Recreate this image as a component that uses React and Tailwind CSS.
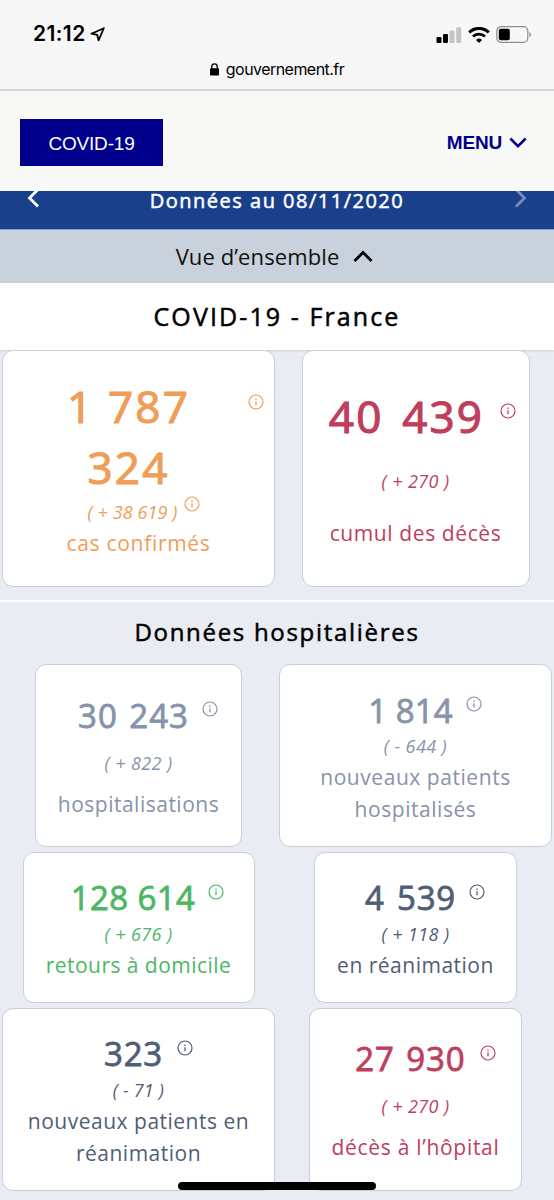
const summary = [
  {
    lines: ["1 787", "324"],
    delta: "( + 38 619 )",
    deltaInfo: true,
    label: ["cas confirmés"],
    color: "text-[#ef9d57]",
    box: "w-[273px] h-[237px] pt-[25px]",
    number:
      "text-[44px] leading-[61px] tracking-[2.2px] [-webkit-text-stroke:1.2px] pl-[54px] gap-[58px]",
    iconClass: "mt-[18px]",
    deltaClass: "tracking-[0.1px] mt-[2px] pl-[10px]",
    labelClass: "mt-[3px] tracking-[0.7px]",
  },
  {
    lines: ["40 439"],
    delta: "( + 270 )",
    label: ["cumul des décès"],
    color: "text-[#be3e5c]",
    box: "w-[228px] h-[237px] pt-[35px]",
    number:
      "text-[44px] leading-[61px] tracking-[2.2px] [word-spacing:5px] [-webkit-text-stroke:1.2px] pl-[14px] gap-[16px]",
    iconClass: "mt-[17px]",
    deltaClass: "mt-[22px] tracking-[0.4px]",
    labelClass: "mt-[24px] tracking-[0.6px]",
  },
];

const hospital = [
  {
    lines: ["30 243"],
    delta: "( + 822 )",
    label: ["hospitalisations"],
    color: "text-[#8693aa]",
    box: "w-[207px] h-[183px] pt-[28px]",
    number:
      "text-[33px] leading-[46px] tracking-[1px] [word-spacing:2px] [-webkit-text-stroke:0.8px] pl-[19px] gap-[13px]",
    iconClass: "mt-[8px]",
    deltaClass: "mt-[12px] tracking-[0.4px]",
    labelClass: "mt-[13px] tracking-[0.5px]",
  },
  {
    lines: ["1 814"],
    delta: "( - 644 )",
    label: ["nouveaux patients", "hospitalisés"],
    color: "text-[#8693aa]",
    box: "w-[273px] h-[183px] pt-[23px]",
    number:
      "text-[33px] leading-[46px] tracking-[0.1px] [-webkit-text-stroke:0.8px] pl-[19px] gap-[13px]",
    iconClass: "mt-[8px]",
    deltaClass: "tracking-[0.4px]",
    labelClass: "mt-[3px] tracking-[0.55px]",
  },
  {
    lines: ["128 614"],
    delta: "( + 676 )",
    label: ["retours à domicile"],
    color: "text-[#4cb763]",
    box: "w-[232px] h-[151px] pt-[22px]",
    number:
      "text-[33px] leading-[46px] tracking-[0.4px] [-webkit-text-stroke:0.8px] pl-[18px] gap-[13px]",
    iconClass: "mt-[9px]",
    deltaClass: "mt-[1px] tracking-[0.4px]",
    labelClass: "mt-[3px] tracking-[0.45px]",
  },
  {
    lines: ["4 539"],
    delta: "( + 118 )",
    label: ["en réanimation"],
    color: "text-[#505d75]",
    box: "w-[203px] h-[151px] pt-[22px]",
    number:
      "text-[33px] leading-[46px] tracking-[0.8px] [word-spacing:3px] [-webkit-text-stroke:0.8px] pl-[19px] gap-[13px]",
    iconClass: "mt-[9px]",
    deltaClass: "mt-[1px] tracking-[0.4px]",
    labelClass: "mt-[3px] tracking-[0.5px]",
  },
  {
    lines: ["323"],
    delta: "( - 71 )",
    label: ["nouveaux patients en", "réanimation"],
    color: "text-[#505d75]",
    box: "w-[273px] h-[183px] pt-[22px]",
    number:
      "text-[33px] leading-[46px] tracking-[0.8px] [-webkit-text-stroke:0.8px] pl-[20px] gap-[14px]",
    iconClass: "mt-[9px]",
    deltaClass: "mt-[1px] tracking-[0.2px]",
    labelClass: "mt-[3px] tracking-[0.5px]",
  },
  {
    lines: ["27 930"],
    delta: "( + 270 )",
    label: ["décès à l’hôpital"],
    color: "text-[#be3e5c]",
    box: "w-[213px] h-[183px] pt-[27px]",
    number:
      "text-[33px] leading-[46px] tracking-[0.9px] [word-spacing:2px] [-webkit-text-stroke:0.8px] pl-[20px] gap-[14px]",
    iconClass: "mt-[9px]",
    deltaClass: "mt-[12px] tracking-[0.4px]",
    labelClass: "mt-[13px] tracking-[0.7px]",
  },
];

const InfoIcon = ({ className }) => (
  <svg
    className={`h-4 w-4 shrink-0 ${className}`}
    viewBox="0 0 16 16"
    fill="none"
    stroke="currentColor"
  >
    <circle cx="8" cy="8" r="7" strokeWidth="1.2" />
    <path d="M8 7.2v4" strokeWidth="1.3" />
    <path d="M8 4.6v1.5" strokeWidth="1.3" />
  </svg>
);

const Chevron = ({ d, className, viewBox = "0 0 20 20" }) => (
  <svg
    className={className}
    viewBox={viewBox}
    fill="none"
    stroke="currentColor"
    strokeWidth="2.8"
  >
    <path d={d} />
  </svg>
);

const Card = ({ item }) => (
  <div className="flex justify-center">
    <div
      className={`shrink-0 rounded-[11px] border border-[#c8cfdc] bg-white text-center ${item.box} ${item.color}`}
    >
      <div className={`flex justify-center ${item.number}`}>
        <div className="whitespace-nowrap">
          {item.lines.map((line) => (
            <div key={line}>{line}</div>
          ))}
        </div>
        <InfoIcon className={item.iconClass} />
      </div>
      <div
        className={`flex h-6 justify-center gap-[6px] text-[18px] leading-6 italic ${item.deltaClass}`}
      >
        <span className="whitespace-nowrap">{item.delta}</span>
        {item.deltaInfo && <InfoIcon className="-mt-[4px]" />}
      </div>
      <div className={`text-[21px] leading-8 ${item.labelClass}`}>
        {item.label.map((line) => (
          <div key={line} className="whitespace-nowrap">
            {line}
          </div>
        ))}
      </div>
    </div>
  </div>
);

const StatusBar = () => (
  <div className="h-[91px] border-b-2 border-[#d5d5d7] bg-[#f7f7f8] font-['Inter',sans-serif] text-black">
    <div className="flex h-[50px] items-end justify-between pr-[23px] pb-[4px] pl-[33px]">
      <div className="flex items-center gap-[4px]">
        <span className="text-[21px] leading-6 font-semibold tracking-[0.4px]">
          21:12
        </span>
        <svg
          className="h-[15px] w-[15px]"
          viewBox="0 0 15 15"
          fill="none"
          stroke="currentColor"
          strokeWidth="1.8"
          strokeLinejoin="round"
        >
          <path d="M13.8 1.2 1.4 6.7 7.2 7.8 8.6 13.4Z" />
        </svg>
      </div>
      <div className="mb-[3px] flex items-center gap-[6px]">
        <svg className="h-4 w-[26px]" viewBox="0 0 26 16">
          <rect x="0.5" y="10" width="5" height="6" rx="1.2" />
          <rect x="7" y="7" width="5" height="9" rx="1.2" />
          <rect x="13.5" y="3.5" width="5" height="12.5" rx="1.2" fill="#c4c4c6" />
          <rect x="20.2" y="0.2" width="5" height="15.8" rx="1.2" fill="#c4c4c6" />
        </svg>
        <svg className="h-4 w-[22px]" viewBox="0 0 22 16" fill="none" stroke="#000">
          <path d="M1.2 5.4a14 14 0 0 1 19.6 0" strokeWidth="3" />
          <path d="M5 9.6a8.6 8.6 0 0 1 12 0" strokeWidth="2.8" />
          <path d="M11 16 8 12.9a4.4 4.4 0 0 1 6 0Z" fill="#000" stroke="none" />
        </svg>
        <svg className="h-[17px] w-[35px]" viewBox="0 0 35 17" fill="none">
          <rect x="0.8" y="0.7" width="31" height="15.6" rx="4.4" stroke="#8e8e90" strokeWidth="1.2" />
          <rect x="2.8" y="2.7" width="11" height="11.6" rx="2" fill="#000" />
          <path d="M33.4 6v5q1.6-.8 1.6-2.5T33.4 6Z" fill="#8e8e90" />
        </svg>
      </div>
    </div>
    <div className="flex h-[38px] items-center justify-center gap-[7px]">
      <svg className="h-[13px] w-[9px]" viewBox="0 0 9 13">
        <rect y="5.2" width="9" height="7.3" rx="1" />
        <path d="M1.8 6V3.6a2.7 2.7 0 0 1 5.4 0V6" fill="none" stroke="#000" strokeWidth="1.3" />
      </svg>
      <span className="text-[16px] tracking-[-0.55px]">gouvernement.fr</span>
    </div>
  </div>
);

const App = () => {
  return (
    <div className="relative h-[1200px] w-[554px] overflow-hidden bg-[#e9edf3] font-['Open_Sans',sans-serif]">
      <StatusBar />

      <header className="flex h-[100px] items-center justify-between bg-[#f8f8f6] pt-[3px] pr-[27px] pl-[20px] font-['Liberation_Sans',sans-serif]">
        <div className="flex h-[47px] w-[143px] items-center justify-center bg-[#00008c] pt-[3px] text-[19px] tracking-[-0.2px] text-white">
          COVID-19
        </div>
        <div className="flex items-center gap-[7px] pt-[1px] text-[19px] font-bold tracking-[-0.2px] text-[#00008c]">
          MENU
          <Chevron className="h-[18px] w-[18px]" d="M1.5 5 10 13.5 18.5 5" />
        </div>
      </header>

      <div className="flex h-[39px] items-start justify-between border-b border-[#8ea3c8] bg-[#1a408c] px-[24px] text-white">
        <Chevron
          className="h-[17px] w-5"
          viewBox="0 3 20 17"
          d="M14 1.5 5.500 10 14 18.500"
        />
        <span className="text-[20px] leading-5 tracking-[1.5px] [-webkit-text-stroke:0.5px]">
          Données au 08/11/2020
        </span>
        <Chevron
          className="h-[17px] w-5 opacity-40"
          viewBox="0 3 20 17"
          d="M6 1.5 14.500 10 6 18.500"
        />
      </div>

      <div className="flex h-[53px] items-center justify-center gap-[14px] bg-[#c9d1dd] pr-[5px] text-[22px] tracking-[0.1px] text-[#111]">
        <span className="-mt-[1px]">Vue d’ensemble</span>
        <Chevron className="h-5 w-5 text-black" d="M1.5 14 10 5.5 18.5 14" />
      </div>

      <h1 className="flex h-[67px] items-center justify-center bg-white text-[25px] tracking-[2.1px] text-black shadow-[0_1px_2px_#c8cfdc] [-webkit-text-stroke:0.5px]">
        COVID-19 - France
      </h1>

      <section className="grid h-[252px] grid-cols-2 border-b-2 border-white">
        {summary.map((item) => (
          <Card key={item.lines[0]} item={item} />
        ))}
      </section>

      <h2 className="flex h-[62px] items-center justify-center pb-[2px] text-[24px] tracking-[1.7px] text-black [-webkit-text-stroke:0.5px]">
        Données hospitalières
      </h2>

      <section className="grid grid-cols-2 gap-y-[5px]">
        {hospital.map((item) => (
          <Card key={item.lines[0]} item={item} />
        ))}
      </section>

      {/* home indicator */}
      <div className="absolute top-[1182px] left-[178px] h-[8px] w-[198px] rounded-full bg-black" />
    </div>
  );
};

export default App;
